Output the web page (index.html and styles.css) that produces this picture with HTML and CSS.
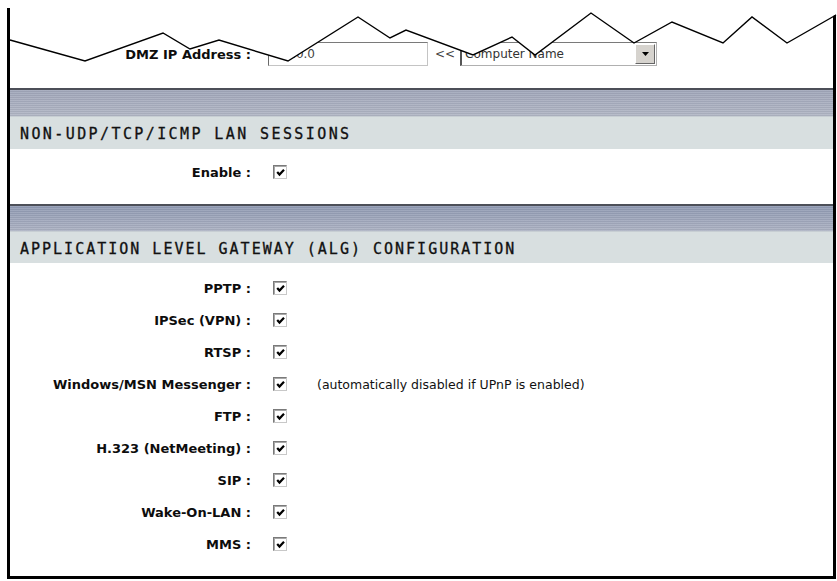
FILE: index.html
```html
<!DOCTYPE html>
<html>
<head>
<meta charset="utf-8">
<link rel="stylesheet" href="styles.css">
</head>
<body>
<div class="frame">
  <div class="dmz-row">
    <div class="label">DMZ IP Address :</div>
    <div class="field">
      <span class="input">0.0.0.0</span>
      <span class="arrows">&lt;&lt;</span>
      <span class="select"><span class="sel-text">Computer Name</span><span class="sel-btn"><svg width="7" height="4" viewBox="0 0 7 4"><polygon points="0,0 7,0 3.5,4" fill="#000"/></svg></span></span>
    </div>
  </div>
  <div class="bar"></div>
  <div class="sec-head h1">NON-UDP/TCP/ICMP LAN SESSIONS</div>
  <div class="sec-body s1">
    <div class="row"><div class="label">Enable :</div><div class="field"><span class="cb"><svg width="9" height="9" viewBox="0 0 9 9"><polyline points="1.2,4 3.5,6.6 8,1.8" fill="none" stroke="#000" stroke-width="2.2"/></svg></span></div></div>
  </div>
  <div class="bar bar2"></div>
  <div class="sec-head h2">APPLICATION LEVEL GATEWAY (ALG) CONFIGURATION</div>
  <div class="sec-body s2">
    <div class="row"><div class="label">PPTP :</div><div class="field"><span class="cb"><svg width="9" height="9" viewBox="0 0 9 9"><polyline points="1.2,4 3.5,6.6 8,1.8" fill="none" stroke="#000" stroke-width="2.2"/></svg></span></div></div>
    <div class="row"><div class="label">IPSec (VPN) :</div><div class="field"><span class="cb"><svg width="9" height="9" viewBox="0 0 9 9"><polyline points="1.2,4 3.5,6.6 8,1.8" fill="none" stroke="#000" stroke-width="2.2"/></svg></span></div></div>
    <div class="row"><div class="label">RTSP :</div><div class="field"><span class="cb"><svg width="9" height="9" viewBox="0 0 9 9"><polyline points="1.2,4 3.5,6.6 8,1.8" fill="none" stroke="#000" stroke-width="2.2"/></svg></span></div></div>
    <div class="row"><div class="label">Windows/MSN Messenger :</div><div class="field"><span class="cb"><svg width="9" height="9" viewBox="0 0 9 9"><polyline points="1.2,4 3.5,6.6 8,1.8" fill="none" stroke="#000" stroke-width="2.2"/></svg></span><span class="desc">(automatically disabled if UPnP is enabled)</span></div></div>
    <div class="row"><div class="label">FTP :</div><div class="field"><span class="cb"><svg width="9" height="9" viewBox="0 0 9 9"><polyline points="1.2,4 3.5,6.6 8,1.8" fill="none" stroke="#000" stroke-width="2.2"/></svg></span></div></div>
    <div class="row"><div class="label">H.323 (NetMeeting) :</div><div class="field"><span class="cb"><svg width="9" height="9" viewBox="0 0 9 9"><polyline points="1.2,4 3.5,6.6 8,1.8" fill="none" stroke="#000" stroke-width="2.2"/></svg></span></div></div>
    <div class="row"><div class="label">SIP :</div><div class="field"><span class="cb"><svg width="9" height="9" viewBox="0 0 9 9"><polyline points="1.2,4 3.5,6.6 8,1.8" fill="none" stroke="#000" stroke-width="2.2"/></svg></span></div></div>
    <div class="row"><div class="label">Wake-On-LAN :</div><div class="field"><span class="cb"><svg width="9" height="9" viewBox="0 0 9 9"><polyline points="1.2,4 3.5,6.6 8,1.8" fill="none" stroke="#000" stroke-width="2.2"/></svg></span></div></div>
    <div class="row"><div class="label">MMS :</div><div class="field"><span class="cb"><svg width="9" height="9" viewBox="0 0 9 9"><polyline points="1.2,4 3.5,6.6 8,1.8" fill="none" stroke="#000" stroke-width="2.2"/></svg></span></div></div>
  </div>
</div>
<svg class="tear" width="837" height="70" viewBox="0 0 837 70">
  <polygon points="10,0 10,40 85,61 163,33 190,49 219,40 288,61 358,17 390,38 406,30 473,55 512,37 535,55 591,13 634,43 672,22 723,43 752,17 787,43 835,15 837,14 837,0" fill="#fff"/>
  <polyline points="10,40 85,61 163,33 190,49 219,40 288,61 358,17 390,38 406,30 473,55 512,37 535,55 591,13 634,43 672,22 723,43 752,17 787,43 836,15" fill="none" stroke="#000" stroke-width="1.4"/>
</svg>
</body>
</html>
```

FILE: styles.css
```css
html, body {
  margin: 0;
  padding: 0;
  background: #fff;
}
body {
  position: relative;
  padding-top: 8px;
  font-family: "DejaVu Sans", Verdana, sans-serif;
  color: #000;
}
.frame {
  box-sizing: border-box;
  margin-left: 7px;
  width: 829px;
  height: 571px;
  border-left: 3px solid #000;
  border-right: 3px solid #000;
  border-bottom: 3px solid #000;
  display: flex;
  flex-direction: column;
}
.dmz-row {
  height: 80px;
  flex: none;
  display: flex;
  align-items: center;
  padding-top: 12px;
  box-sizing: border-box;
}
.label {
  width: 241px;
  flex: none;
  text-align: right;
  font-weight: bold;
  font-size: 13px;
  color: #0d0d0d;
  white-space: nowrap;
}
.field {
  display: flex;
  align-items: center;
  padding-left: 17px;
}
.input {
  box-sizing: border-box;
  width: 160px;
  height: 24px;
  border: 1px solid #c4c4c4;
  border-top-color: #7a7a7a;
  border-left-color: #6a6a6a;
  font-size: 12px;
  color: #444;
  padding-left: 4px;
  display: flex;
  align-items: center;
}
.arrows {
  font-size: 12px;
  color: #444;
  margin-left: 7px;
  margin-right: 5px;
}
.select {
  box-sizing: border-box;
  width: 197px;
  height: 24px;
  border: 1px solid #b0b0b0;
  border-top-color: #7a7a7a;
  border-left: 2px solid #555;
  display: flex;
  align-items: center;
  justify-content: space-between;
  font-size: 12px;
  color: #333;
}
.sel-text {
  padding-left: 3px;
}
.sel-btn {
  box-sizing: border-box;
  width: 20px;
  height: 20px;
  margin-right: 1px;
  background: #d6d3ce;
  border: 1px solid #fff;
  border-right-color: #666;
  border-bottom-color: #666;
  display: flex;
  align-items: center;
  justify-content: center;
}
.bar {
  height: 28px;
  flex: none;
  box-sizing: border-box;
  border-top: 2px solid #4c4f58;
  background:
    repeating-linear-gradient(to bottom, rgba(255,255,255,0.10) 0px, rgba(255,255,255,0.10) 1px, rgba(0,0,0,0.04) 1px, rgba(0,0,0,0.04) 2px),
    linear-gradient(to bottom, #a0a6b9, #b0b5c4);
}
.bar2 {
  height: 27px;
  background:
    repeating-linear-gradient(to bottom, rgba(255,255,255,0.10) 0px, rgba(255,255,255,0.10) 1px, rgba(0,0,0,0.04) 1px, rgba(0,0,0,0.04) 2px),
    linear-gradient(to bottom, #8f99b2, #abb1c2);
}
.sec-head {
  flex: none;
  background: #d8dfe0;
  border-top: 1px solid #c7ced3;
  box-sizing: border-box;
  display: flex;
  align-items: center;
  padding-left: 10px;
  padding-top: 2px;
  font-family: "DejaVu Sans Mono", monospace;
  font-size: 15px;
  color: #111;
  -webkit-text-stroke: 0.3px #111;
  white-space: nowrap;
}
.h1 { height: 33px; letter-spacing: 2.4px; }
.h2 { height: 32px; letter-spacing: 2px; }
.sec-body {
  flex: none;
  display: flex;
  flex-direction: column;
}
.s1 {
  padding: 7px 0 16px;
}
.s2 {
  padding: 9px 0 17px;
}
.row {
  height: 32px;
  display: flex;
  align-items: center;
}
.cb {
  box-sizing: border-box;
  width: 14px;
  height: 14px;
  margin-left: 5px;
  border: 1px solid #7a7a7a;
  border-right-color: #c8c8c8;
  border-bottom-color: #c8c8c8;
  background: #fff;
  box-shadow: inset 1px 1px 0 #a8a8a8;
  display: flex;
  align-items: center;
  justify-content: center;
  flex: none;
}
.desc {
  margin-left: 30px;
  font-size: 12.5px;
  color: #111;
  white-space: nowrap;
}
.tear {
  position: absolute;
  left: 0;
  top: 0;
}
```
